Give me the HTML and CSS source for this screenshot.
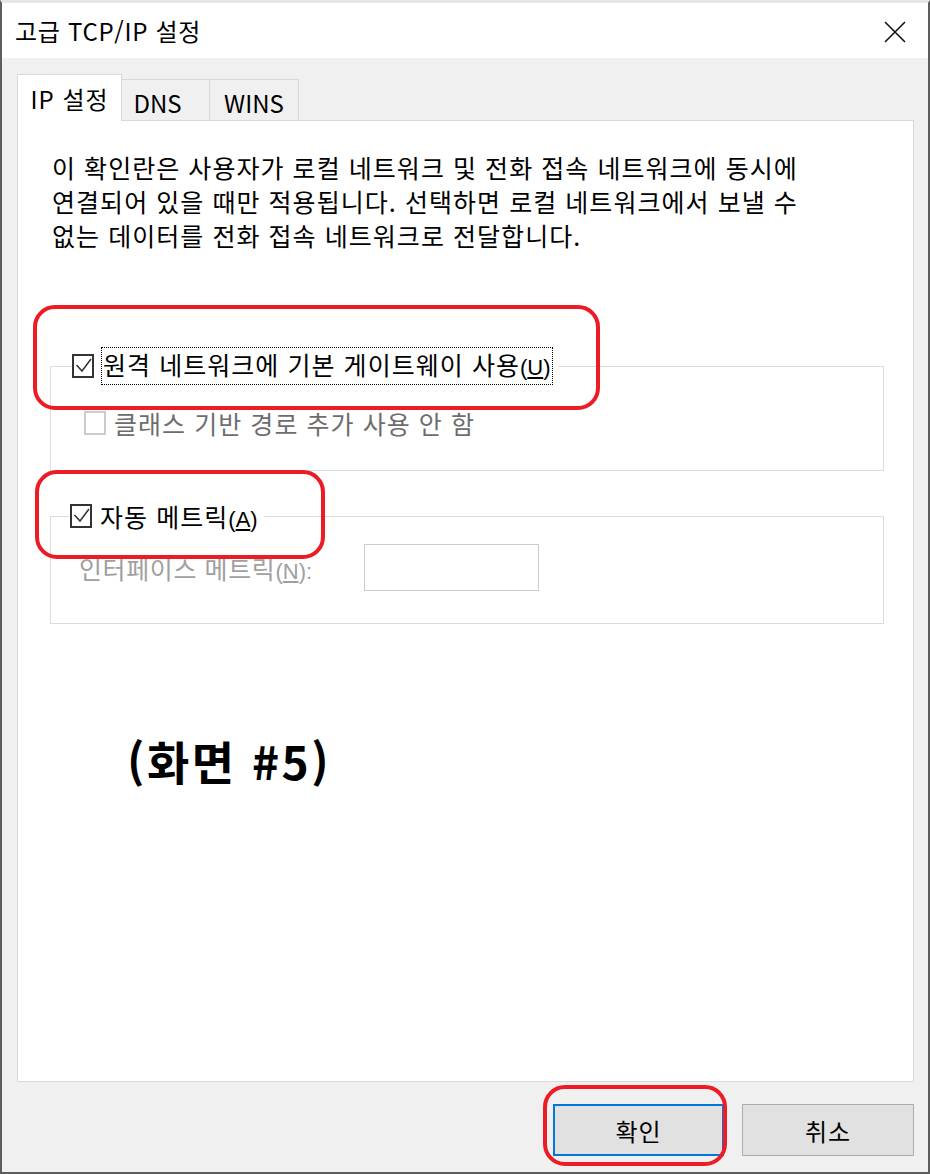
FILE: index.html
```html
<!DOCTYPE html>
<html lang="ko">
<head>
  <meta charset="UTF-8" />
  <title>고급 TCP/IP 설정</title>
  <link rel="stylesheet" href="styles.css">
</head>
<body>

  <div class="window">
    <div class="titlebar">
      <span class="title">고급 TCP/IP 설정</span>
      <svg class="close" width="22" height="22" viewBox="0 0 22 22">
        <path d="M1 1 L21 21 M21 1 L1 21" stroke="#111" stroke-width="1.6" fill="none"/>
      </svg>
    </div>

    <div class="content">
      <div class="tabs">
        <div class="tab active">IP 설정</div>
        <div class="tab dns">DNS</div>
        <div class="tab wins">WINS</div>
      </div>

      <div class="panel">
        <p class="intro">
          이 확인란은 사용자가 로컬 네트워크 및 전화 접속 네트워크에 동시에<br>
          연결되어 있을 때만 적용됩니다. 선택하면 로컬 네트워크에서 보낼 수<br>
          없는 데이터를 전화 접속 네트워크로 전달합니다.
        </p>

        <fieldset class="group group-gateway">
          <legend class="check">
            <span class="box"><svg width="18" height="20" viewBox="0 0 18 20"><path d="M2.5 9 L8 15 L17 3" stroke="#333" stroke-width="1.5" fill="none"/></svg></span>
            <span class="label focused">원격 네트워크에 기본 게이트웨이 사용<span class="mn">(<u>U</u>)</span></span>
          </legend>
          <div class="check disabled">
            <span class="box"></span>
            <span class="label">클래스 기반 경로 추가 사용 안 함</span>
          </div>
        </fieldset>

        <fieldset class="group group-metric">
          <legend class="check">
            <span class="box"><svg width="18" height="20" viewBox="0 0 18 20"><path d="M2.5 9 L8 15 L17 3" stroke="#333" stroke-width="1.5" fill="none"/></svg></span>
            <span class="label">자동 메트릭<span class="mn">(<u>A</u>)</span></span>
          </legend>
          <div class="metric-row">
            <span class="metric-label">인터페이스 메트릭<span class="mn">(<u>N</u>):</span></span>
            <span class="metric-input"></span>
          </div>
        </fieldset>

        <div class="caption">(화면 #5)</div>
      </div>

      <div class="actions">
        <button class="btn primary">확인</button>
        <button class="btn">취소</button>
      </div>
    </div>

    <!-- annotation marks -->
    <div class="mark mark-gateway"></div>
    <div class="mark mark-metric"></div>
    <div class="mark mark-ok"></div>
  </div>

</body>
</html>
```

FILE: styles.css
```css
body {
  margin: 0;
  padding: 0;
  background: #ffffff;
  font-family: "Noto Sans CJK KR", "Noto Sans", sans-serif;
}

.window {
  position: relative;
  width: 930px;
  height: 1174px;
  box-sizing: border-box;
  border: 2px solid #5d5d5d;
  border-top: 3px solid #e6e6e6;
  display: flex;
  flex-direction: column;
  color: #000;
}

.titlebar {
  height: 55px;
  background: #fff;
  display: flex;
  align-items: center;
  justify-content: space-between;
  padding: 0 22px 0 13px;
}

.title {
  font-size: 24px;
  letter-spacing: 0.7px;
}

.close {
  margin-top: 2px;
}

.content {
  flex: 1;
  background: #f0f0f0;
  padding: 16px 14px 0 15px;
  display: flex;
  flex-direction: column;
}

/* tabs */
.tabs {
  display: flex;
  align-items: flex-end;
  height: 46px;
}

.tab {
  box-sizing: border-box;
  height: 41px;
  border: 1px solid #d9d9d9;
  border-bottom: none;
  background: #f0f0f0;
  font-size: 24px;
  display: flex;
  align-items: center;
  justify-content: center;
  padding-top: 4px;
}

.tab.active {
  width: 105px;
  height: 47px;
  background: #fff;
  position: relative;
  z-index: 1;
  margin-bottom: -1px;
  padding-top: 0;
  letter-spacing: 1px;
}

.tab.dns {
  width: 88px;
  border-left: none;
  padding-right: 16px;
}

.tab.wins {
  width: 89px;
  border-left: none;
}

.panel {
  height: 962px;
  box-sizing: border-box;
  background: #fff;
  border: 1px solid #d9d9d9;
  padding: 0 29px 0 32px;
}

.intro {
  margin: 29px 0 0 2px;
  font-size: 25px;
  letter-spacing: 1.05px;
  line-height: 34px;
}

/* group boxes */
.group {
  margin: 97px 0 0 0;
  border: 1px solid #dcdcdc;
  padding: 23px 0 30px 21px;
  min-width: 0;
}

.group-metric {
  margin-top: 28px;
  padding: 11px 0 32px 19px;
}

.check {
  display: flex;
  align-items: center;
  gap: 8px;
  font-size: 25px;
  letter-spacing: 1.05px;
  height: 34px;
  padding: 0;
}

legend.check {
  padding: 0 6px 0 0;
}

.box {
  width: 18px;
  height: 20px;
  border: 2px solid #333;
  background: #fff;
  flex-shrink: 0;
  display: flex;
}

.label.focused {
  outline: 1px dotted #000;
  outline-offset: 0;
  padding: 0 1px;
  line-height: 32px;
}

.mn {
  font-family: "Liberation Sans", sans-serif;
  font-size: 22px;
  letter-spacing: 0;
}

.check.disabled {
  margin-left: 12px;
  color: #6d6d6d;
}

.check.disabled .box {
  border-color: #cccccc;
}

.metric-row {
  display: flex;
  align-items: center;
  padding-left: 9px;
}

.metric-label {
  color: #a0a0a0;
  font-size: 25px;
  letter-spacing: 0.6px;
  width: 285px;
}

.metric-input {
  width: 173px;
  height: 45px;
  border: 1px solid #cccccc;
  background: #fff;
}

.caption {
  margin: 103px 0 0 77px;
  font-size: 46px;
  font-weight: 700;
  letter-spacing: 2.5px;
}

/* buttons */
.actions {
  display: flex;
  justify-content: flex-end;
  gap: 18px;
  margin-top: 22px;
}

.btn {
  width: 172px;
  height: 52px;
  background: #e1e1e1;
  border: 1px solid #adadad;
  font-family: "Noto Sans CJK KR", sans-serif;
  font-size: 24px;
  letter-spacing: 1px;
  color: #000;
}

.btn.primary {
  width: 171px;
  border: 2px solid #0078d7;
}

/* red annotation rounded boxes */
.mark {
  position: absolute;
  border: 4px solid #ed1c24;
  border-radius: 22px;
  box-sizing: border-box;
}

.mark-gateway {
  left: 31px;
  top: 302px;
  width: 567px;
  height: 105px;
}

.mark-metric {
  left: 33px;
  top: 467px;
  width: 290px;
  height: 89px;
}

.mark-ok {
  left: 541px;
  top: 1082px;
  width: 184px;
  height: 81px;
}
```
